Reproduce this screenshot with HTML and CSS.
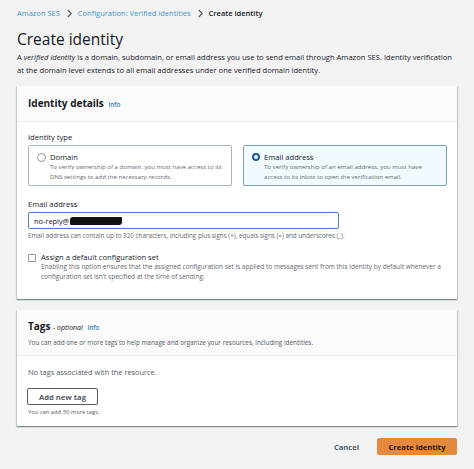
FILE: index.html
```html
<!DOCTYPE html>
<html lang="en">
<head>
<meta charset="utf-8">
<title>Create identity</title>
<link rel="stylesheet" href="styles.css">
</head>
<body>
<div class="page">
  <nav class="crumbs">
    <a class="crumb">Amazon SES</a>
    <svg class="chev" viewBox="0 0 8 10" width="7" height="9"><path d="M2 1l4 4-4 4" fill="none" stroke="#545b64" stroke-width="1.3"/></svg>
    <a class="crumb">Configuration: Verified identities</a>
    <svg class="chev" viewBox="0 0 8 10" width="7" height="9"><path d="M2 1l4 4-4 4" fill="none" stroke="#545b64" stroke-width="1.3"/></svg>
    <span class="crumb current">Create identity</span>
  </nav>

  <h1 class="title">Create identity</h1>
  <p class="lead">A <em>verified identity</em> is a domain, subdomain, or email address you use to send email through Amazon SES. Identity verification<br>at the domain level extends to all email addresses under one verified domain identity.</p>

  <section class="panel panel-details">
    <header class="panel-head">
      <h2 class="panel-title">Identity details <span class="info">Info</span></h2>
    </header>
    <div class="panel-body">
      <div class="label">Identity type</div>
      <div class="tiles">
        <div class="tile">
          <span class="radio"></span>
          <div class="tile-text">
            <div class="tile-title">Domain</div>
            <div class="tile-desc">To verify ownership of a domain, you must have access to its DNS settings to add the necessary records.</div>
          </div>
        </div>
        <div class="tile selected">
          <span class="radio on"></span>
          <div class="tile-text">
            <div class="tile-title">Email address</div>
            <div class="tile-desc">To verify ownership of an email address, you must have access to its inbox to open the verification email.</div>
          </div>
        </div>
      </div>

      <div class="label label-email">Email address</div>
      <div class="input"><span class="input-text">no-reply@</span><span class="redact"></span></div>
      <div class="hint">Email address can contain up to 320 characters, including plus signs (+), equals signs (=) and underscores (_).</div>

      <div class="check-row">
        <span class="checkbox"></span>
        <div class="check-text">
          <div class="check-title">Assign a default configuration set</div>
          <div class="check-desc">Enabling this option ensures that the assigned configuration set is applied to messages sent from this identity by default whenever a configuration set isn't specified at the time of sending.</div>
        </div>
      </div>
    </div>
  </section>

  <section class="panel panel-tags">
    <header class="panel-head tags-head">
      <h2 class="panel-title">Tags <span class="optional">- optional</span> <span class="info">Info</span></h2>
      <div class="panel-desc">You can add one or more tags to help manage and organize your resources, including identities.</div>
    </header>
    <div class="panel-body tags-body">
      <div class="empty">No tags associated with the resource.</div>
      <button class="btn">Add new tag</button>
      <div class="note">You can add 50 more tags.</div>
    </div>
  </section>

  <footer class="actions">
    <button class="link-btn">Cancel</button>
    <button class="primary">Create identity</button>
  </footer>
</div>
</body>
</html>
```

FILE: styles.css
```css
html, body {
  margin: 0;
  padding: 0;
  background: #f2f2f2;
}
body {
  font-family: "Open Sans", "Noto Sans", sans-serif;
  color: #16191f;
  width: 474px;
  height: 469px;
  overflow: hidden;
}
.page {
  padding: 6px 17px 0 17px;
}
.crumbs {
  display: flex;
  align-items: center;
  height: 14px;
  font-size: 7.5px;
}
.crumb {
  color: #0073bb;
  opacity: 0.75;
}
.crumb.current {
  color: #16191f;
  opacity: 1;
  font-weight: 600;
}
.chev {
  margin: 0 5px 0 6px;
}
.title {
  margin: 8px 0 0 0;
  font-size: 15.5px;
  line-height: 22px;
  font-weight: 400;
  color: #16191f;
}
.lead {
  margin: 1px 0 0 0;
  font-size: 7.6px;
  line-height: 13px;
  color: #16191f;
  width: 440px;
  white-space: nowrap;
}
.panel {
  background: #fff;
  box-shadow: 0 1px 1px rgba(0,28,36,0.3), 1px 1px 1px rgba(0,28,36,0.15), -1px 1px 1px rgba(0,28,36,0.15);
}
.panel-details {
  margin-top: 9px;
}
.panel-head {
  background: #fafafa;
  border-bottom: 1px solid #eaeded;
  height: 35px;
  padding: 0 11px;
  display: flex;
  flex-direction: column;
  justify-content: center;
}
.panel-title {
  margin: 0;
  font-size: 10px;
  font-weight: 700;
  line-height: 14px;
}
.info {
  font-size: 6.2px;
  color: #3a7fc0;
  font-weight: 600;
  margin-left: 2px;
}
.optional {
  font-size: 7px;
  font-style: italic;
  font-weight: 400;
}
.panel-body {
  padding: 9px 10px 0 11px;
}
.label {
  font-size: 7.6px;
  line-height: 12px;
}
.tiles {
  display: flex;
  gap: 11px;
  margin-top: 2px;
}
.tile {
  flex: 1;
  height: 41px;
  box-sizing: border-box;
  border: 1px solid #aab7b8;
  border-radius: 2px;
  display: flex;
  padding: 6px 8px 0 8px;
  gap: 4px;
}
.tile.selected {
  background: #f1faff;
  border-color: #7aa0c4;
}
.radio {
  width: 7px;
  height: 7px;
  border: 1px solid #8d9696;
  border-radius: 50%;
  flex: none;
  margin-top: 1px;
}
.radio.on {
  border: 2.5px solid #1e5c95;
  width: 4px;
  height: 4px;
}
.tile-title {
  font-size: 7.6px;
  line-height: 10px;
}
.tile-desc {
  font-size: 6.1px;
  line-height: 10px;
  color: #5f6870;
}
.label-email {
  margin-top: 12px;
}
.input {
  margin-top: 2px;
  width: 311px;
  height: 17px;
  box-sizing: border-box;
  border: 1px solid #4f7fb3;
  border-radius: 2px;
  display: flex;
  align-items: center;
  padding-left: 5px;
  font-size: 7.4px;
}
.redact {
  display: inline-block;
  width: 52px;
  height: 8px;
  background: #111;
  border-radius: 3px 1px 3px 1px;
  margin-left: 1px;
}
.hint {
  margin-top: 2px;
  font-size: 6.3px;
  line-height: 10px;
  color: #5f6870;
}
.check-row {
  display: flex;
  gap: 5px;
  margin-top: 11px;
  padding-bottom: 17px;
}
.checkbox {
  width: 6px;
  height: 6px;
  border: 1px solid #8d9696;
  border-radius: 1px;
  flex: none;
  margin-top: 2px;
}
.check-title {
  font-size: 7.6px;
  line-height: 10px;
}
.check-desc {
  font-size: 6.5px;
  line-height: 10px;
  color: #5f6870;
}
.panel-tags {
  margin-top: 11px;
}
.tags-head {
  height: 46px;
  box-sizing: border-box;
  padding-top: 2px;
}
.panel-desc {
  font-size: 6.4px;
  line-height: 10px;
  margin-top: 3px;
  color: #545b64;
}
.tags-body {
  padding-top: 10px;
  padding-bottom: 9px;
}
.empty {
  font-size: 7.4px;
  line-height: 12px;
  color: #545b64;
}
.btn {
  margin-top: 10px;
  display: block;
  width: 71px;
  height: 17px;
  box-sizing: border-box;
  border: 1px solid #545b64;
  border-radius: 2px;
  background: #fff;
  font-family: inherit;
  font-size: 7.6px;
  font-weight: 700;
  color: #545b64;
  padding: 0;
  margin-left: -1px;
}
.note {
  margin-top: 2px;
  font-size: 5.8px;
  line-height: 10px;
  color: #545b64;
}
.actions {
  display: flex;
  justify-content: flex-end;
  align-items: center;
  margin-top: 12px;
  gap: 18px;
  padding-right: 0;
}
.link-btn {
  background: none;
  border: none;
  font-family: inherit;
  font-size: 7.6px;
  font-weight: 700;
  color: #545b64;
  padding: 0;
}
.primary {
  width: 80px;
  height: 17px;
  border: none;
  border-radius: 2px;
  background: #e5893f;
  font-family: inherit;
  font-size: 7.6px;
  font-weight: 700;
  color: #16191f;
  padding: 0;
}
```
